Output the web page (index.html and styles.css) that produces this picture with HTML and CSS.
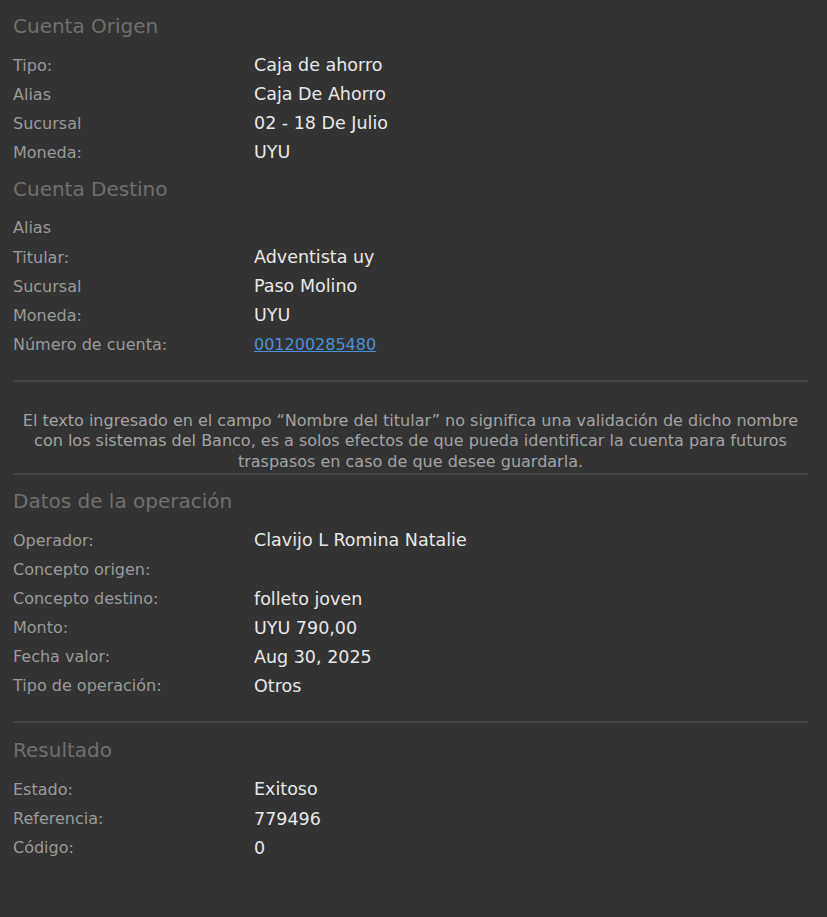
FILE: index.html
```html
<!DOCTYPE html>
<html lang="es">
<head>
<meta charset="utf-8">
<title>Comprobante</title>
<link rel="stylesheet" href="styles.css">
</head>
<body>
<main class="page">
  <section class="section">
    <h2 class="heading">Cuenta Origen</h2>
    <div class="row"><span class="label">Tipo:</span><span class="value">Caja de ahorro</span></div>
    <div class="row"><span class="label">Alias</span><span class="value">Caja De Ahorro</span></div>
    <div class="row"><span class="label">Sucursal</span><span class="value">02 - 18 De Julio</span></div>
    <div class="row"><span class="label">Moneda:</span><span class="value">UYU</span></div>
  </section>
  <section class="section">
    <h2 class="heading">Cuenta Destino</h2>
    <div class="row"><span class="label">Alias</span><span class="value"></span></div>
    <div class="row"><span class="label">Titular:</span><span class="value">Adventista uy</span></div>
    <div class="row"><span class="label">Sucursal</span><span class="value">Paso Molino</span></div>
    <div class="row"><span class="label">Moneda:</span><span class="value">UYU</span></div>
    <div class="row"><span class="label">Número de cuenta:</span><span class="value"><a class="link" href="#">001200285480</a></span></div>
  </section>
  <hr class="sep sep-before-note">
  <p class="note">El texto ingresado en el campo “Nombre del titular” no significa una validación de dicho nombre con los sistemas del Banco, es a solos efectos de que pueda identificar la cuenta para futuros traspasos en caso de que desee guardarla.</p>
  <hr class="sep sep-after-note">
  <section class="section">
    <h2 class="heading heading-first">Datos de la operación</h2>
    <div class="row"><span class="label">Operador:</span><span class="value">Clavijo L Romina Natalie</span></div>
    <div class="row"><span class="label">Concepto origen:</span><span class="value"></span></div>
    <div class="row"><span class="label">Concepto destino:</span><span class="value">folleto joven</span></div>
    <div class="row"><span class="label">Monto:</span><span class="value">UYU 790,00</span></div>
    <div class="row"><span class="label">Fecha valor:</span><span class="value">Aug 30, 2025</span></div>
    <div class="row"><span class="label">Tipo de operación:</span><span class="value">Otros</span></div>
  </section>
  <hr class="sep sep-section">
  <section class="section">
    <h2 class="heading heading-first">Resultado</h2>
    <div class="row"><span class="label">Estado:</span><span class="value">Exitoso</span></div>
    <div class="row"><span class="label">Referencia:</span><span class="value">779496</span></div>
    <div class="row"><span class="label">Código:</span><span class="value">0</span></div>
  </section>
</main>
</body>
</html>
```
FILE: styles.css
```css
html, body {
  margin: 0;
  padding: 0;
  background: #333333;
  height: 100%;
}
body {
  font-family: "DejaVu Sans", Verdana, sans-serif;
  color: #e6e6e6;
}
.page {
  padding: 4px 19px 40px 13px;
}
.section {
  display: flex;
  flex-direction: column;
}
.heading {
  margin: 7px 0 8.5px 0;
  font-size: 20px;
  font-weight: normal;
  line-height: 31px;
  color: #6f6f6f;
}
.heading-first {
  margin-top: 0;
}
.row {
  display: grid;
  grid-template-columns: 241px 1fr;
  height: 29.1px;
  align-items: center;
}
.label {
  font-size: 16px;
  color: #9a9a9a;
}
.value {
  font-size: 17.5px;
  color: #e8e8e8;
}
.link {
  font-size: 16px;
  color: #4a90d9;
  text-decoration: underline;
}
.sep {
  border: 0;
  height: 2px;
  background: #444444;
  margin: 0;
}
.sep-before-note {
  margin-top: 21px;
  margin-bottom: 29px;
}
.sep-after-note {
  margin-top: 1px;
  margin-bottom: 11px;
}
.sep-section {
  margin-top: 21px;
  margin-bottom: 12px;
}
.note {
  margin: 0;
  padding: 0;
  text-align: center;
  font-size: 16px;
  line-height: 20.5px;
  color: #a3a3a3;
}
```
